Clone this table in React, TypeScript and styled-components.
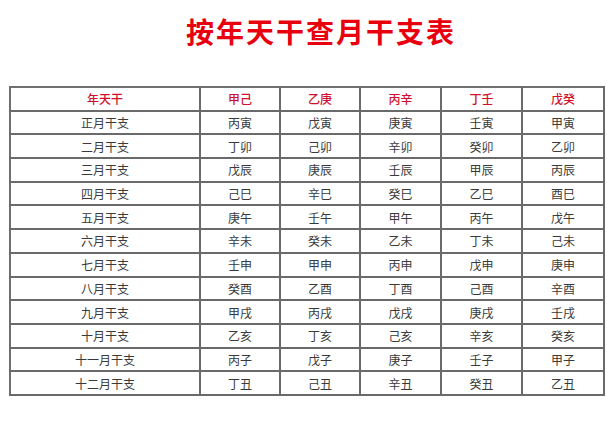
import React from 'react';
import styled, { createGlobalStyle } from 'styled-components';

const GlobalStyle = createGlobalStyle`
    html, body {
        margin: 0;
        padding: 0;
        background: #ffffff;
    }
    body {
        font-family: "Noto Sans CJK SC", "Noto Sans", sans-serif;
    }
`;

const header = ['年天干', '甲己', '乙庚', '丙辛', '丁壬', '戊癸'];

const rows: string[][] = [
    ['正月干支', '丙寅', '戊寅', '庚寅', '壬寅', '甲寅'],
    ['二月干支', '丁卯', '己卯', '辛卯', '癸卯', '乙卯'],
    ['三月干支', '戊辰', '庚辰', '壬辰', '甲辰', '丙辰'],
    ['四月干支', '己巳', '辛巳', '癸巳', '乙巳', '酉巳'],
    ['五月干支', '庚午', '壬午', '甲午', '丙午', '戊午'],
    ['六月干支', '辛未', '癸未', '乙未', '丁未', '己未'],
    ['七月干支', '壬申', '甲申', '丙申', '戊申', '庚申'],
    ['八月干支', '癸酉', '乙酉', '丁酉', '己酉', '辛酉'],
    ['九月干支', '甲戌', '丙戌', '戊戌', '庚戌', '壬戌'],
    ['十月干支', '乙亥', '丁亥', '己亥', '辛亥', '癸亥'],
    ['十一月干支', '丙子', '戊子', '庚子', '壬子', '甲子'],
    ['十二月干支', '丁丑', '己丑', '辛丑', '癸丑', '乙丑'],
];

const colWidths = [190, 80, 80, 81, 81, 82];

const Page = styled.div`
    width: 607px;
    height: 445px;
    padding: 13px 0 0 9px;
    box-sizing: border-box;
`;

const Title = styled.h1`
    margin: 0 0 37px 0;
    padding-left: 26px;
    text-align: center;
    color: #e8000f;
    font-size: 28px;
    font-weight: 700;
    letter-spacing: 2px;
    line-height: 36px;
`;

const Table = styled.table`
    border-collapse: collapse;
    table-layout: fixed;
    width: 594px;
    border: 2px solid #707070;
`;

const Cell = styled.td<{ $head?: boolean }>`
    height: 21.7px;
    padding: 0;
    border: 1px solid #6a6a6a;
    border-width: 1px 2px 2px 1px;
    text-align: center;
    font-size: 12px;
    line-height: 21px;
    color: ${p => (p.$head ? '#d0102c' : '#3a3a3a')};
    font-weight: ${p => (p.$head ? 500 : 400)};
`;

export default function App() {
    return (
        <>
            <GlobalStyle />
            <Page>
                <Title>按年天干查月干支表</Title>
                <Table>
                    <colgroup>
                        {colWidths.map((w, i) => (
                            <col key={i} style={{ width: w }} />
                        ))}
                    </colgroup>
                    <tbody>
                        <tr>
                            {header.map(h => (
                                <Cell key={h} $head>{h}</Cell>
                            ))}
                        </tr>
                        {rows.map(r => (
                            <tr key={r[0]}>
                                {r.map((c, i) => (
                                    <Cell key={i}>{c}</Cell>
                                ))}
                            </tr>
                        ))}
                    </tbody>
                </Table>
            </Page>
        </>
    );
}
